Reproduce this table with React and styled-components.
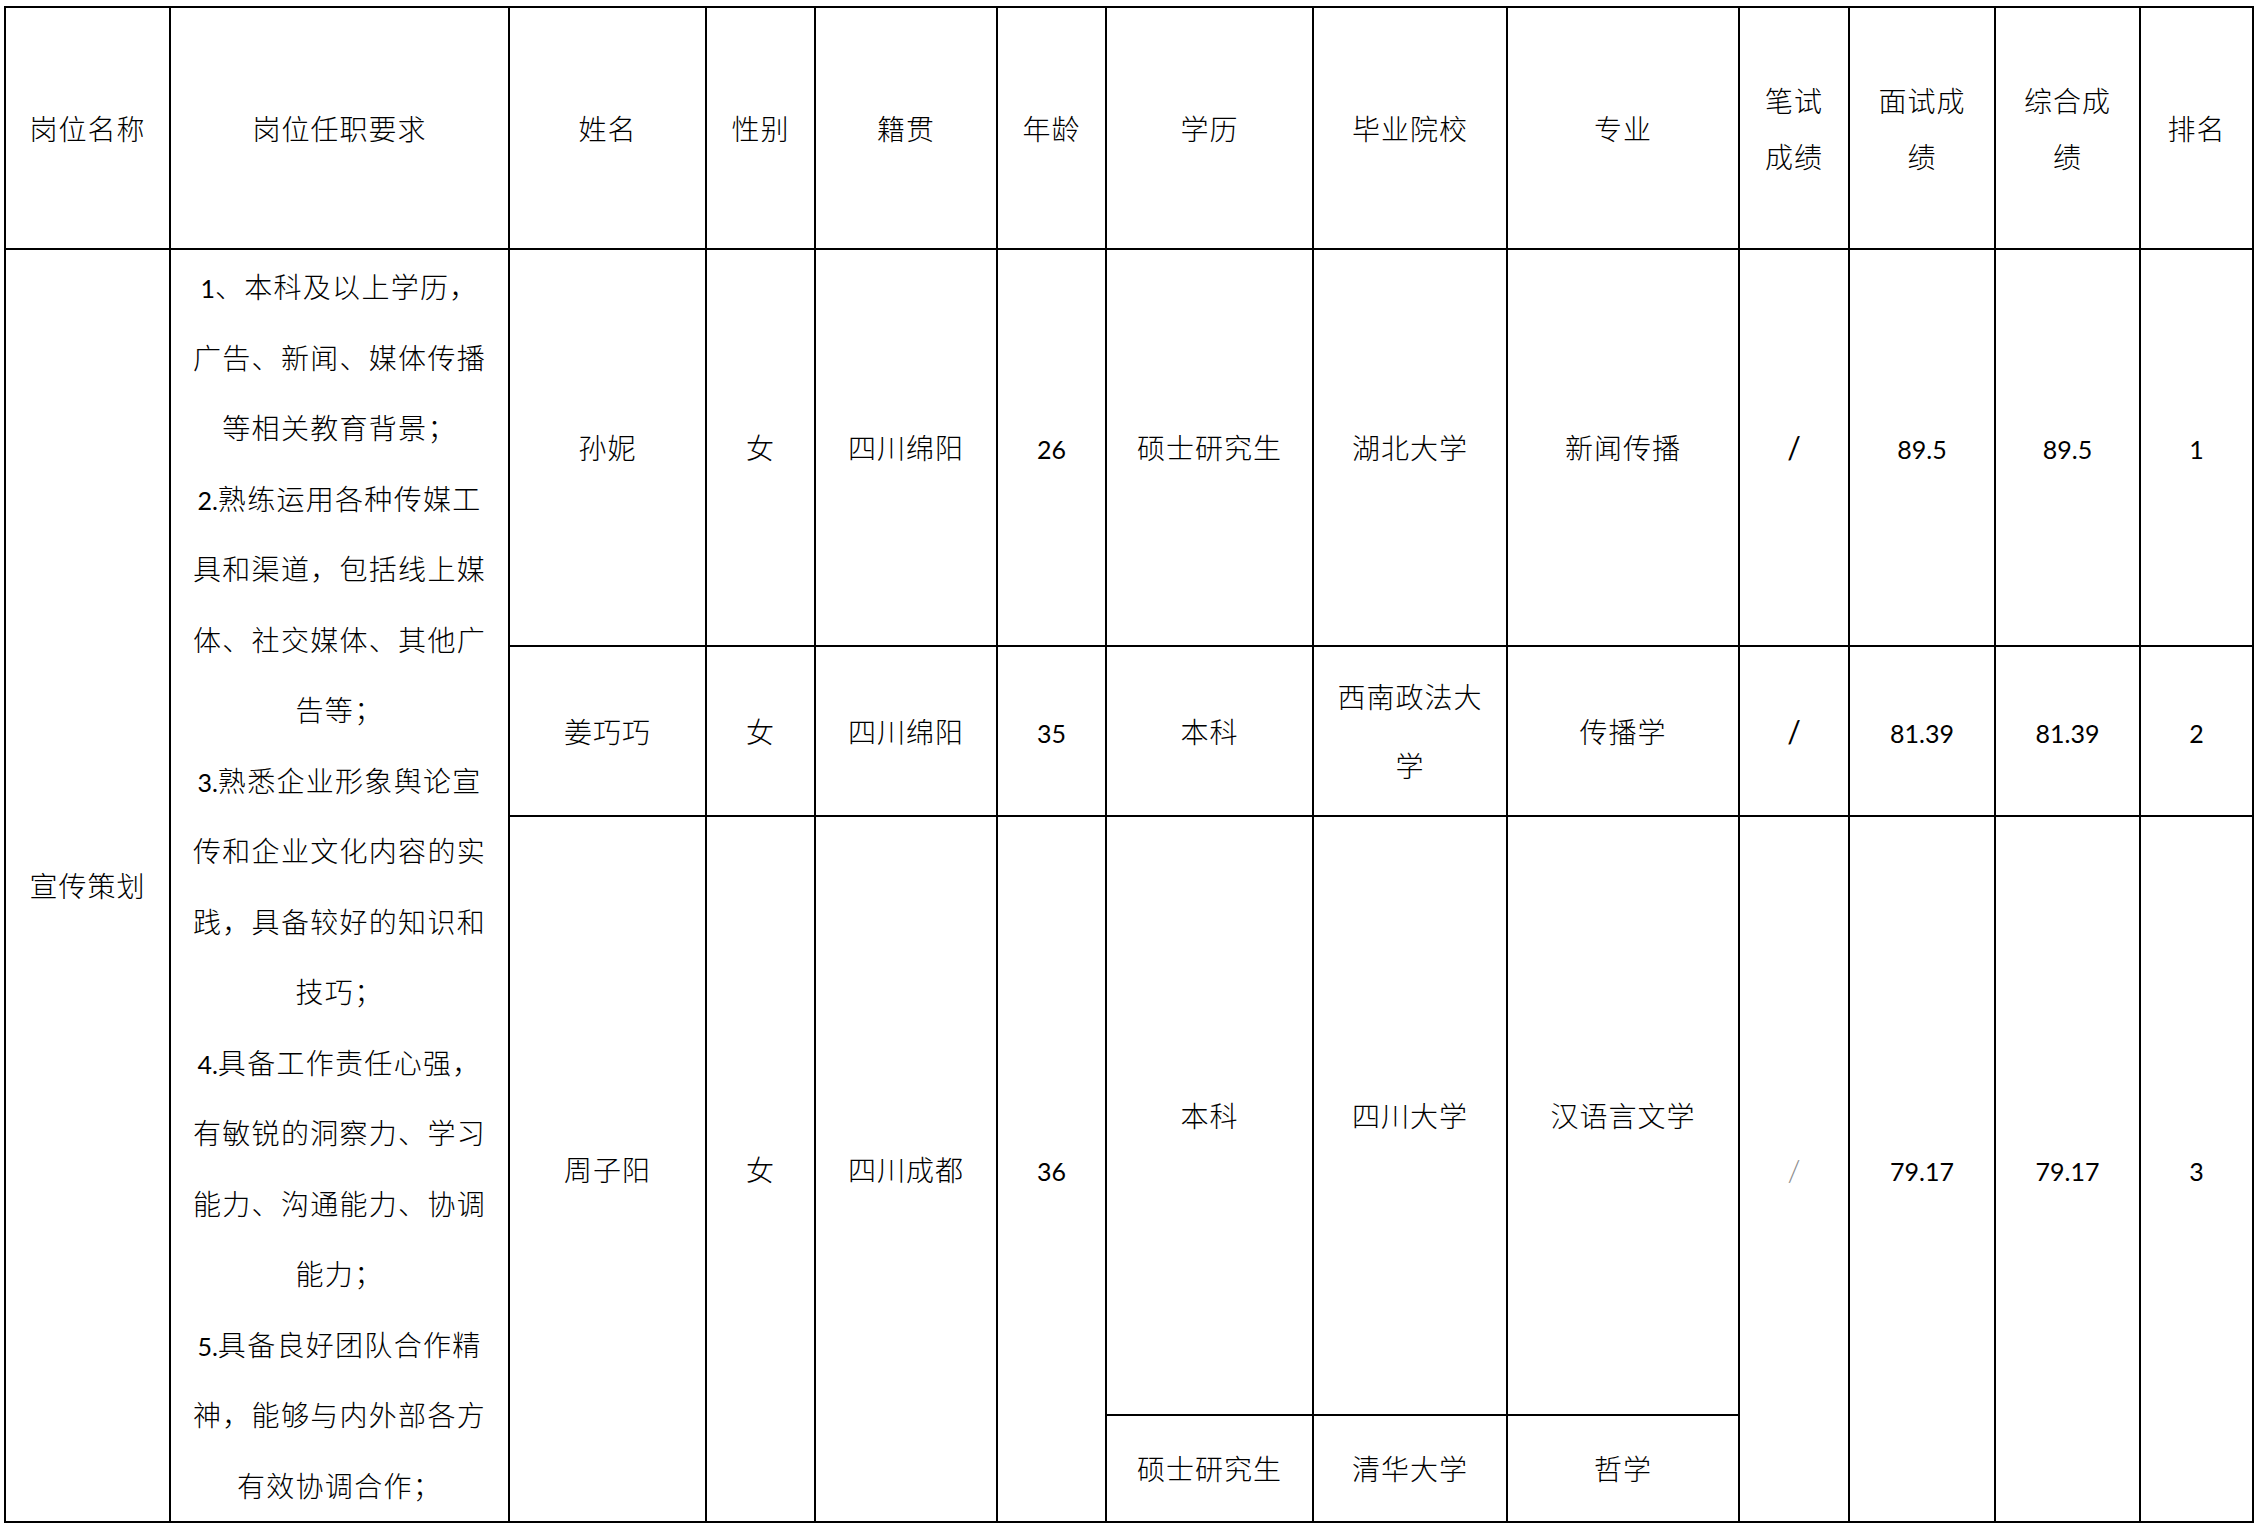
import React from "react";
import styled, { createGlobalStyle } from "styled-components";

const GlobalStyle = createGlobalStyle`
  html, body {
    margin: 0;
    padding: 0;
    background: #ffffff;
  }
  body {
    font-family: "Noto Sans CJK SC", "Noto Sans", sans-serif;
    color: #000000;
  }
`;

const Page = styled.div`
  width: 2261px;
  height: 1534px;
  box-sizing: border-box;
  padding: 6px 0 0 4px;
  background: #ffffff;
  overflow: hidden;
`;

const Table = styled.table`
  table-layout: fixed;
  border-collapse: separate;
  border-spacing: 0;
  width: 2250px;
  border-left: 2px solid #000;
  border-top: 2px solid #000;
`;

const Row = styled.tr`
  height: ${(p) => p.$h}px;
`;

const cellBase = `
  box-sizing: border-box;
  padding: 0;
  border-right: 2px solid #000;
  border-bottom: 2px solid #000;
  text-align: center;
  vertical-align: middle;
  font-family: "Noto Sans CJK SC", sans-serif;
  font-size: 28px;
  font-weight: 300;
  letter-spacing: 1px;
  color: #000;
  white-space: nowrap;
  overflow: hidden;
`;

const HeadCell = styled.th`
  ${cellBase}
  width: ${(p) => p.$w}px;
  line-height: 56px;
`;

const Cell = styled.td`
  ${cellBase}
  line-height: 69px;
`;

const ReqCell = styled.td`
  ${cellBase}
  line-height: 70.5px;
  letter-spacing: 1.3px;
`;

const ReqLine = styled.span`
  display: block;
  height: 70.5px;
`;

const Num = styled.span`
  font-family: "Lato", "Liberation Sans", sans-serif;
  font-size: 25px;
  font-weight: 400;
  letter-spacing: 0;
  line-height: 0;
`;

const Slash = styled.span`
  font-family: "Lato", "Liberation Sans", sans-serif;
  font-size: 30px;
  letter-spacing: 0;
  line-height: 0;
  color: ${(p) => (p.$faint ? "#8c8c8c" : "#000")};
  font-weight: ${(p) => (p.$faint ? 300 : 400)};
`;

const columns = [
  { w: 165, label: ["岗位名称"] },
  { w: 339, label: ["岗位任职要求"] },
  { w: 197, label: ["姓名"] },
  { w: 109, label: ["性别"] },
  { w: 182, label: ["籍贯"] },
  { w: 109, label: ["年龄"] },
  { w: 207, label: ["学历"] },
  { w: 194, label: ["毕业院校"] },
  { w: 232, label: ["专业"] },
  { w: 110, label: ["笔试", "成绩"] },
  { w: 146, label: ["面试成", "绩"] },
  { w: 145, label: ["综合成", "绩"] },
  { w: 113, label: ["排名"] },
];

const requirements = [
  "1、本科及以上学历，",
  "广告、新闻、媒体传播",
  "等相关教育背景；",
  "2.熟练运用各种传媒工",
  "具和渠道，包括线上媒",
  "体、社交媒体、其他广",
  "告等；",
  "3.熟悉企业形象舆论宣",
  "传和企业文化内容的实",
  "践，具备较好的知识和",
  "技巧；",
  "4.具备工作责任心强，",
  "有敏锐的洞察力、学习",
  "能力、沟通能力、协调",
  "能力；",
  "5.具备良好团队合作精",
  "神，能够与内外部各方",
  "有效协调合作；",
];

function ReqText({ text }) {
  const m = text.match(/^(\d+\.?)(.*)$/);
  if (!m) return <ReqLine>{text}</ReqLine>;
  return (
    <ReqLine>
      <Num>{m[1]}</Num>
      {m[2]}
    </ReqLine>
  );
}

function Lines({ parts }) {
  return parts.map((t, i) => (
    <React.Fragment key={i}>
      {i > 0 && <br />}
      {t}
    </React.Fragment>
  ));
}

export default function App() {
  return (
    <>
      <GlobalStyle />
      <Page>
        <Table>
          <thead>
            <Row $h={242}>
              {columns.map((c, i) => (
                <HeadCell key={i} $w={c.w}>
                  <Lines parts={c.label} />
                </HeadCell>
              ))}
            </Row>
          </thead>
          <tbody>
            <Row $h={397}>
              <Cell rowSpan={4}>宣传策划</Cell>
              <ReqCell rowSpan={4}>
                {requirements.map((t, i) => (
                  <ReqText key={i} text={t} />
                ))}
              </ReqCell>
              <Cell>孙妮</Cell>
              <Cell>女</Cell>
              <Cell>四川绵阳</Cell>
              <Cell><Num>26</Num></Cell>
              <Cell>硕士研究生</Cell>
              <Cell>湖北大学</Cell>
              <Cell>新闻传播</Cell>
              <Cell><Slash>/</Slash></Cell>
              <Cell><Num>89.5</Num></Cell>
              <Cell><Num>89.5</Num></Cell>
              <Cell><Num>1</Num></Cell>
            </Row>
            <Row $h={170}>
              <Cell>姜巧巧</Cell>
              <Cell>女</Cell>
              <Cell>四川绵阳</Cell>
              <Cell><Num>35</Num></Cell>
              <Cell>本科</Cell>
              <Cell>
                <Lines parts={["西南政法大", "学"]} />
              </Cell>
              <Cell>传播学</Cell>
              <Cell><Slash>/</Slash></Cell>
              <Cell><Num>81.39</Num></Cell>
              <Cell><Num>81.39</Num></Cell>
              <Cell><Num>2</Num></Cell>
            </Row>
            <Row $h={599}>
              <Cell rowSpan={2}>周子阳</Cell>
              <Cell rowSpan={2}>女</Cell>
              <Cell rowSpan={2}>四川成都</Cell>
              <Cell rowSpan={2}><Num>36</Num></Cell>
              <Cell>本科</Cell>
              <Cell>四川大学</Cell>
              <Cell>汉语言文学</Cell>
              <Cell rowSpan={2}><Slash $faint>/</Slash></Cell>
              <Cell rowSpan={2}><Num>79.17</Num></Cell>
              <Cell rowSpan={2}><Num>79.17</Num></Cell>
              <Cell rowSpan={2}><Num>3</Num></Cell>
            </Row>
            <Row $h={107}>
              <Cell>硕士研究生</Cell>
              <Cell>清华大学</Cell>
              <Cell>哲学</Cell>
            </Row>
          </tbody>
        </Table>
      </Page>
    </>
  );
}
